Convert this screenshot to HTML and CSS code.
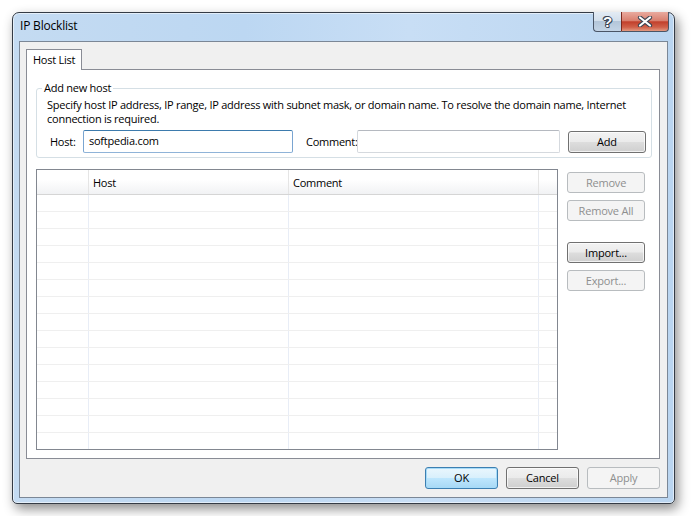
FILE: index.html
```html
<!DOCTYPE html>
<html>
<head>
<meta charset="utf-8">
<title>IP Blocklist</title>
<link rel="stylesheet" href="styles.css">
</head>
<body>
<div class="window">
  <div class="titlebar">
    <span class="title">IP Blocklist</span>
    <div class="caption-buttons">
      <div class="cap cap-help"><span class="cap-q">?</span></div>
      <div class="cap cap-close">
        <svg width="16" height="11" viewBox="0 0 16 11">
          <path d="M3 1.5 L13 9.5 M13 1.5 L3 9.5" stroke="#3a4452" stroke-width="4.2" stroke-linecap="round"/>
          <path d="M3 1.5 L13 9.5 M13 1.5 L3 9.5" stroke="#ffffff" stroke-width="2.2" stroke-linecap="round"/>
        </svg>
      </div>
    </div>
  </div>
  <div class="client">
    <div class="tabs"><div class="tab">Host List</div></div>
    <div class="panel">
      <fieldset class="group">
        <legend>Add new host</legend>
        <p class="desc">Specify host IP address, IP range, IP address with subnet mask, or domain name. To resolve the domain name, Internet<br>connection is required.</p>
        <div class="form-row">
          <label class="lbl lbl-host">Host:</label>
          <div class="input input-host focused">softpedia.com</div>
          <label class="lbl lbl-comment">Comment:</label>
          <div class="input input-comment"></div>
          <button class="btn btn-add">Add</button>
        </div>
      </fieldset>
      <div class="list-area">
        <div class="table">
          <div class="thead">
            <div class="c c1"></div>
            <div class="c c2">Host</div>
            <div class="c c3">Comment</div>
            <div class="c c4"></div>
          </div>
          <div class="tbody">
            <div class="row"><div class="c c1"></div><div class="c c2"></div><div class="c c3"></div><div class="c c4"></div></div>
            <div class="row"><div class="c c1"></div><div class="c c2"></div><div class="c c3"></div><div class="c c4"></div></div>
            <div class="row"><div class="c c1"></div><div class="c c2"></div><div class="c c3"></div><div class="c c4"></div></div>
            <div class="row"><div class="c c1"></div><div class="c c2"></div><div class="c c3"></div><div class="c c4"></div></div>
            <div class="row"><div class="c c1"></div><div class="c c2"></div><div class="c c3"></div><div class="c c4"></div></div>
            <div class="row"><div class="c c1"></div><div class="c c2"></div><div class="c c3"></div><div class="c c4"></div></div>
            <div class="row"><div class="c c1"></div><div class="c c2"></div><div class="c c3"></div><div class="c c4"></div></div>
            <div class="row"><div class="c c1"></div><div class="c c2"></div><div class="c c3"></div><div class="c c4"></div></div>
            <div class="row"><div class="c c1"></div><div class="c c2"></div><div class="c c3"></div><div class="c c4"></div></div>
            <div class="row"><div class="c c1"></div><div class="c c2"></div><div class="c c3"></div><div class="c c4"></div></div>
            <div class="row"><div class="c c1"></div><div class="c c2"></div><div class="c c3"></div><div class="c c4"></div></div>
            <div class="row"><div class="c c1"></div><div class="c c2"></div><div class="c c3"></div><div class="c c4"></div></div>
            <div class="row"><div class="c c1"></div><div class="c c2"></div><div class="c c3"></div><div class="c c4"></div></div>
            <div class="row"><div class="c c1"></div><div class="c c2"></div><div class="c c3"></div><div class="c c4"></div></div>
            <div class="row last"><div class="c c1"></div><div class="c c2"></div><div class="c c3"></div><div class="c c4"></div></div>
          </div>
        </div>
        <div class="side-buttons">
          <button class="btn disabled">Remove</button>
          <button class="btn disabled">Remove All</button>
          <button class="btn btn-import">Import...</button>
          <button class="btn disabled">Export...</button>
        </div>
      </div>
    </div>
    <div class="footer">
      <button class="btn btn-foot default">OK</button>
      <button class="btn btn-foot">Cancel</button>
      <button class="btn btn-foot disabled">Apply</button>
    </div>
  </div>
</div>
</body>
</html>
```

FILE: styles.css
```css
* { box-sizing: border-box; }

body {
  margin: 0;
  padding: 12px;
  background: #ffffff;
  font-family: "Open Sans", "Noto Sans", "Liberation Sans", sans-serif;
  font-size: 11px;
  letter-spacing: -0.25px;
  color: #000;
}

.window {
  width: 663px;
  height: 492px;
  border: 1px solid #343b45;
  border-radius: 7px 7px 5px 5px;
  background: linear-gradient(to right, #c4dbf2 0%, #bcd7f2 35%, #c8def5 60%, #bad5f0 100%);
  box-shadow: 3px 5px 12px rgba(0, 0, 0, 0.45), inset 0 0 0 1px rgba(255, 255, 255, 0.55);
  padding: 0 6px 5px 6px;
  display: flex;
  flex-direction: column;
}

.titlebar {
  height: 28px;
  display: flex;
  align-items: flex-start;
  justify-content: space-between;
}

.title {
  padding-left: 1px;
  line-height: 26px;
  font-size: 12px;
  letter-spacing: -0.2px;
  color: #000;
}

.caption-buttons {
  display: flex;
  margin-top: -1px;
  margin-right: -1px;
}

.cap {
  height: 20px;
  border: 1px solid #4a5566;
  border-top: none;
  display: flex;
  align-items: center;
  justify-content: center;
}

.cap-help {
  width: 28px;
  border-right: none;
  border-radius: 0 0 0 4px;
  background: linear-gradient(to bottom, #e3ebf4 0%, #d3dfeb 45%, #b4c6d9 50%, #c3d4e6 100%);
}

.cap-q {
  font-family: "Liberation Sans", sans-serif;
  font-weight: bold;
  font-size: 15px;
  color: #fff;
  line-height: 1;
  letter-spacing: 0;
  text-shadow: 1px 0 0 #3b4656, -1px 0 0 #3b4656, 0 1px 0 #3b4656, 0 -1px 0 #3b4656, 1px 1px 0 #3b4656, -1px -1px 0 #3b4656;
}

.cap-close {
  width: 48px;
  border-radius: 0 0 4px 0;
  background: linear-gradient(to bottom, #e9aa9e 0%, #d9806f 45%, #c2402c 52%, #d0614a 80%, #e29a82 100%);
  border-left: 1px solid #7b2a1f;
}

.client {
  flex: 1;
  border: 1px solid #7b8796;
  background: #f0f0f0;
  padding: 7px 7px 8px 6px;
  display: flex;
  flex-direction: column;
}

.tabs {
  display: flex;
  position: relative;
  z-index: 1;
  margin-bottom: -1px;
}

.tab {
  height: 21px;
  border: 1px solid #898c95;
  border-bottom: none;
  background: #fff;
  padding: 0 6px;
  line-height: 20px;
}

.panel {
  flex: 1;
  border: 1px solid #898c95;
  background: #fff;
  padding: 0 7px 8px 9px;
  display: flex;
  flex-direction: column;
}

.group {
  margin: 11px 0 0 0;
  padding: 0 0 4px 0;
  border: 1px solid #d5dfe5;
  border-radius: 3px;
  min-width: 0;
}

.group legend {
  margin-left: 5px;
  padding: 0 2px;
  line-height: 14px;
}

.desc {
  margin: 3px 0 0 10px;
  line-height: 14px;
  white-space: nowrap;
}

.form-row {
  margin-top: 4px;
  display: flex;
  align-items: center;
}

.lbl {
  line-height: 14px;
  white-space: nowrap;
}

.lbl-host {
  margin-left: 13px;
  width: 33px;
}

.lbl-comment {
  margin-left: 13px;
  width: 51px;
}

.input {
  height: 23px;
  border: 1px solid #d5d9de;
  border-top-color: #b5b9c0;
  border-radius: 2px;
  background: #fff;
  padding-left: 5px;
  line-height: 20px;
}

.input-host {
  width: 210px;
}

.input.focused {
  border-color: #8fb3d8;
  border-top-color: #3d7bad;
  border-left-color: #7aa5d1;
  border-right-color: #7aa5d1;
}

.input-comment {
  width: 203px;
}

.btn {
  font-family: inherit;
  font-size: 11px;
  letter-spacing: -0.2px;
  height: 21px;
  padding: 0;
  border: 1px solid #707070;
  border-radius: 3px;
  color: #000;
  background: linear-gradient(to bottom, #f2f2f2 0%, #ebebeb 48%, #dddddd 52%, #cfcfcf 100%);
  box-shadow: inset 0 0 0 1px rgba(255, 255, 255, 0.7);
  line-height: 18px;
}

.btn.disabled {
  border-color: #b8bcbf;
  background: #f4f4f4;
  color: #8e8f8f;
  box-shadow: none;
}

.btn-add {
  width: 78px;
  height: 22px;
  margin-left: 8px;
}

.list-area {
  flex: 1;
  margin-top: 11px;
  display: flex;
  align-items: flex-start;
}

.table {
  width: 522px;
  height: 281px;
  border: 1px solid #828790;
  display: flex;
  flex-direction: column;
}

.thead {
  height: 25px;
  display: flex;
  border-bottom: 1px solid #d5d5d5;
  background: linear-gradient(to bottom, #ffffff 0%, #ffffff 40%, #f1f2f4 100%);
}

.thead .c {
  line-height: 24px;
  padding-left: 4px;
  padding-top: 1px;
  border-right: 1px solid #e5e5e5;
}

.thead .c4 { border-right: none; }

.c1 { width: 52px; }
.c2 { width: 200px; }
.c3 { width: 250px; }
.c4 { flex: 1; }

.tbody {
  flex: 1;
  display: flex;
  flex-direction: column;
}

.row {
  height: 17px;
  display: flex;
  border-bottom: 1px solid #efefef;
}

.row.last {
  height: 16px;
  border-bottom: none;
}

.row .c {
  border-right: 1px solid #e8edf6;
}

.row .c4 { border-right: none; }

.side-buttons {
  margin-left: 9px;
  margin-top: 3px;
  display: flex;
  flex-direction: column;
  width: 78px;
}

.side-buttons .btn {
  width: 78px;
  margin-bottom: 7px;
}

.side-buttons .btn-import {
  margin-top: 14px;
}

.footer {
  margin-top: 8px;
  display: flex;
  justify-content: flex-end;
  gap: 8px;
}

.btn-foot {
  width: 73px;
  height: 22px;
}

.btn.default {
  border-color: #3c7fb1;
  background: linear-gradient(to bottom, #eaf6fd 0%, #d9f0fc 48%, #bee6fd 52%, #a7d9f5 100%);
  box-shadow: inset 0 0 0 1px #a6dbf8;
}
```
